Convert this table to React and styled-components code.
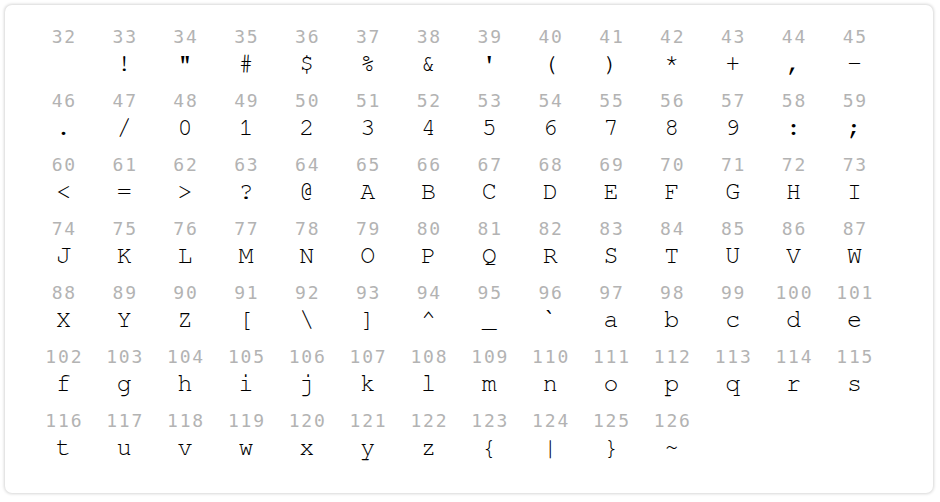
import React from 'react'
import styled, { createGlobalStyle } from 'styled-components'

const GlobalStyle = createGlobalStyle`
  html, body {
    margin: 0;
    padding: 0;
    background: #ffffff;
  }
`

const Page = styled.div`
  padding: 5px 7px 9px 5px;
`

const Card = styled.div`
  background: #fff;
  border-radius: 7px;
  box-shadow: 0 0 3px 1px rgba(0, 0, 0, 0.16);
  padding: 21px 0 18px 28px;
  height: 488px;
  box-sizing: border-box;
`

const Grid = styled.div`
  display: grid;
  grid-template-columns: repeat(14, 60.85px);
  row-gap: 10px;
`

const Cell = styled.div`
  display: flex;
  flex-direction: column;
  align-items: center;
`

const Code = styled.span`
  font-family: "DejaVu Sans Mono", monospace;
  font-size: 18px;
  line-height: 22px;
  letter-spacing: 1.8px;
  margin-right: -1.8px;
  color: #b3b3b3;
`

const Glyph = styled.span`
  font-family: "Nimbus Mono PS", "Nimbus Mono L", "FreeMono", "Courier New", "Liberation Mono", monospace;
  font-size: 25px;
  line-height: 32px;
  height: 32px;
  color: #000;
  white-space: pre;
`

const codes = Array.from({ length: 95 }, (_, i) => 32 + i)

export default function App() {
  return (
    <>
      <GlobalStyle />
      <Page>
        <Card>
          <Grid>
            {codes.map((c) => (
              <Cell key={c}>
                <Code>{c}</Code>
                <Glyph>{String.fromCharCode(c)}</Glyph>
              </Cell>
            ))}
          </Grid>
        </Card>
      </Page>
    </>
  )
}
